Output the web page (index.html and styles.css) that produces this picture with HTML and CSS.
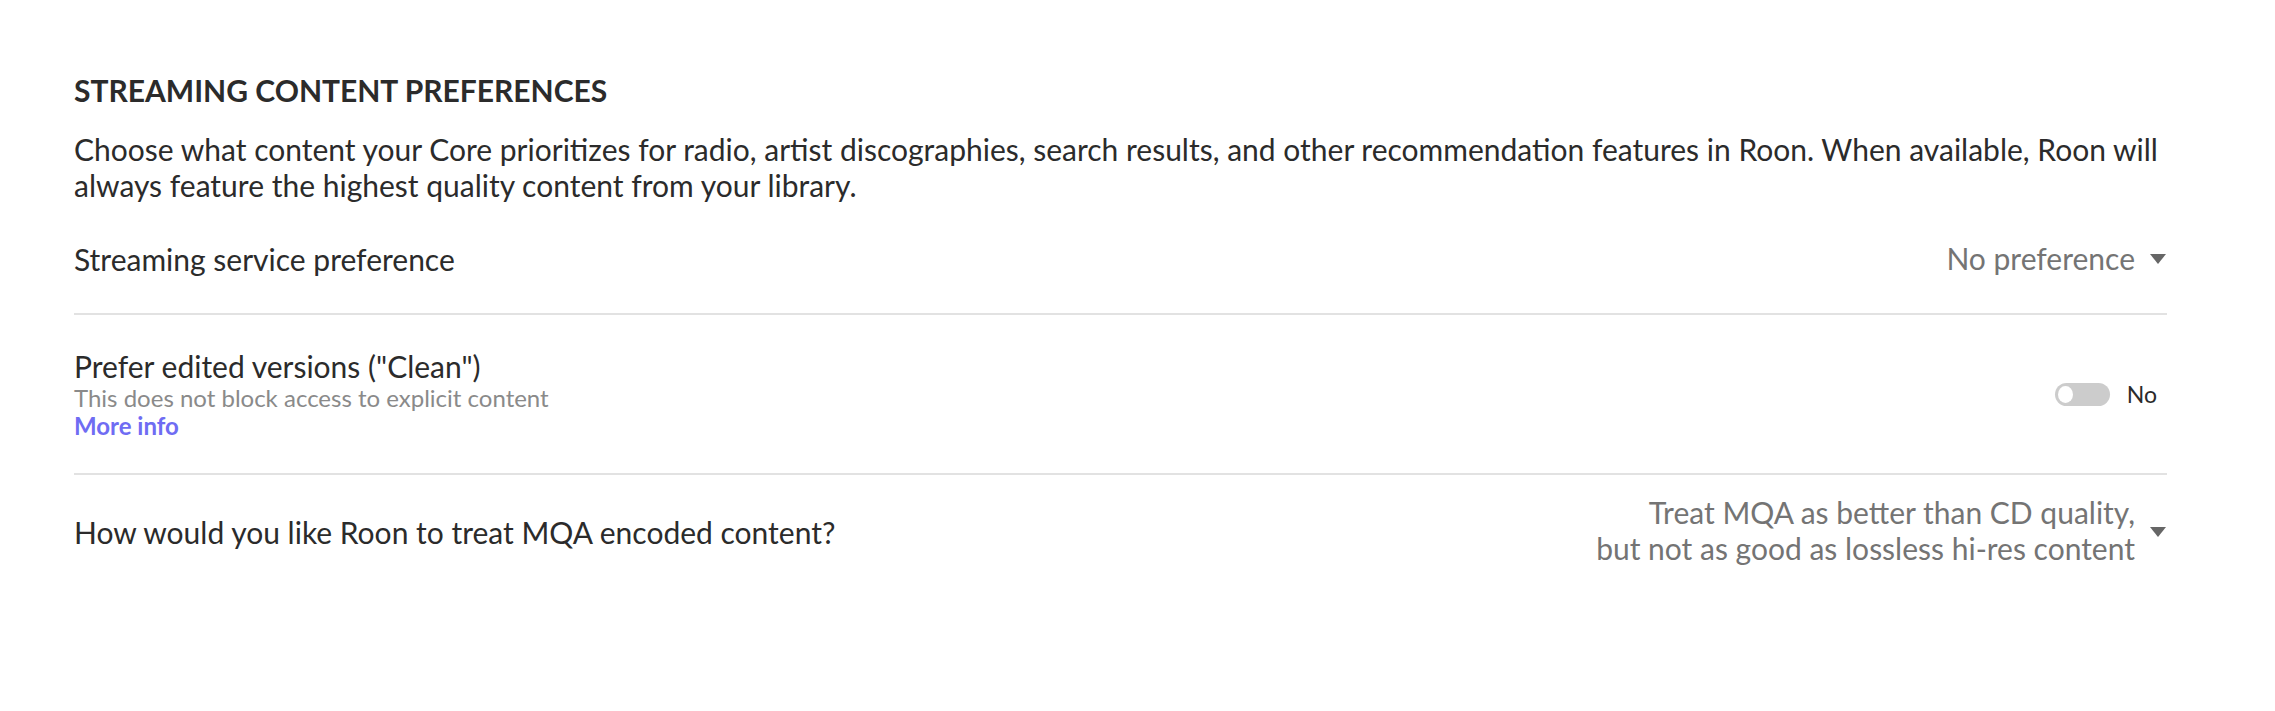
FILE: index.html
```html
<!DOCTYPE html>
<html lang="en">
<head>
    <meta charset="UTF-8">
    <title>Streaming Content Preferences</title>
    <link rel="stylesheet" href="styles.css">
</head>
<body>
    <div class="settings">
        <h2 class="section-title">STREAMING CONTENT PREFERENCES</h2>
        <p class="section-desc">Choose what content your Core prioritizes for radio, artist discographies, search results, and other recommendation features in Roon. When available, Roon will always feature the highest quality content from your library.</p>

        <!-- service preference -->
        <div class="setting-row">
            <div class="setting-label">Streaming service preference</div>
            <div class="dropdown">
                <span class="dropdown-value">No preference</span>
                <span class="caret"></span>
            </div>
        </div>

        <!-- clean versions -->
        <div class="setting-row with-note">
            <div class="setting-label">
                Prefer edited versions ("Clean")
                <div class="setting-sub">This does not block access to explicit content</div>
                <a href="#" class="more-info">More info</a>
            </div>
            <div class="toggle-wrap">
                <span class="toggle"><span class="knob"></span></span>
                <span class="toggle-text">No</span>
            </div>
        </div>

        <!-- MQA -->
        <div class="setting-row last">
            <div class="setting-label">How would you like Roon to treat MQA encoded content?</div>
            <div class="dropdown">
                <span class="dropdown-value">Treat MQA as better than CD quality,<br>but not as good as lossless hi-res content</span>
                <span class="caret"></span>
            </div>
        </div>
    </div>
</body>
</html>
```

FILE: styles.css
```css
:root {
    --text-color: #2b2b2b;
    --muted-color: #747474;
    --sub-color: #8a8a8a;
    --line-color: #e2e2e2;
    --link-color: #6f6cf3;
}

body {
    margin: 0;
    padding: 0;
    background: #fff;
    font-family: Lato, "Open Sans", sans-serif;
    color: var(--text-color);
}

.settings {
    width: 2093px;
    margin-left: 74px;
    padding-top: 70px;
}

.section-title {
    margin: 0;
    font-size: 30px;
    font-weight: 700;
    line-height: 40px;
}

.section-desc {
    margin: 21px 0 2px 0;
    font-size: 30px;
    line-height: 36px;
}

.setting-row {
    display: flex;
    justify-content: space-between;
    align-items: center;
    min-height: 64px;
    padding: 22px 0;
    border-bottom: 2px solid var(--line-color);
}

.setting-row.with-note {
    padding: 33px 0;
}

.setting-row.last {
    border-bottom: none;
}

.setting-label {
    font-size: 30px;
    line-height: 36px;
}

.setting-sub {
    font-size: 24px;
    line-height: 28px;
    color: var(--sub-color);
}

.more-info {
    display: block;
    font-size: 24px;
    line-height: 28px;
    font-weight: 700;
    color: var(--link-color);
    text-decoration: none;
}

.dropdown {
    display: flex;
    align-items: center;
    gap: 15px;
    color: var(--muted-color);
    font-size: 30px;
    line-height: 36px;
    text-align: right;
}

.dropdown-value {
    margin-top: -3px;
}

.caret {
    width: 0;
    height: 0;
    border-left: 8px solid transparent;
    border-right: 8px solid transparent;
    border-top: 10px solid #666;
    margin-right: 1px;
}

.toggle-wrap {
    display: flex;
    align-items: center;
    gap: 17px;
    margin-right: 10px;
}

.toggle {
    display: flex;
    align-items: center;
    width: 55px;
    height: 23px;
    border-radius: 12px;
    background: #cccccc;
    box-sizing: border-box;
    padding-left: 3px;
}

.knob {
    width: 15px;
    height: 17px;
    border-radius: 50%;
    background: #fff;
}

.toggle-text {
    font-size: 23px;
}
```
